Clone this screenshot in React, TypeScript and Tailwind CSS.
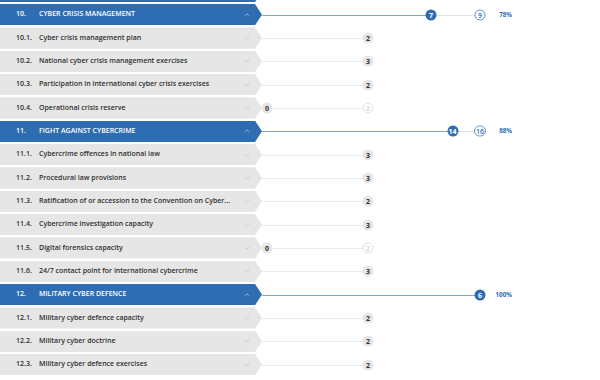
import React from "react";

type Item = { num: string; label: string; value: number; max: number };
type Section = { num: string; title: string; score: number; max: number; pct: string; items: Item[] };

const sections: Section[] = [
  {
    num: "10.",
    title: "CYBER CRISIS MANAGEMENT",
    score: 7,
    max: 9,
    pct: "78%",
    items: [
      { num: "10.1.", label: "Cyber crisis management plan", value: 2, max: 2 },
      { num: "10.2.", label: "National cyber crisis management exercises", value: 3, max: 3 },
      { num: "10.3.", label: "Participation in international cyber crisis exercises", value: 2, max: 2 },
      { num: "10.4.", label: "Operational crisis reserve", value: 0, max: 2 },
    ],
  },
  {
    num: "11.",
    title: "FIGHT AGAINST CYBERCRIME",
    score: 14,
    max: 16,
    pct: "88%",
    items: [
      { num: "11.1.", label: "Cybercrime offences in national law", value: 3, max: 3 },
      { num: "11.2.", label: "Procedural law provisions", value: 3, max: 3 },
      { num: "11.3.", label: "Ratification of or accession to the Convention on Cyber...", value: 2, max: 2 },
      { num: "11.4.", label: "Cybercrime investigation capacity", value: 3, max: 3 },
      { num: "11.5.", label: "Digital forensics capacity", value: 0, max: 2 },
      { num: "11.6.", label: "24/7 contact point for international cybercrime", value: 3, max: 3 },
    ],
  },
  {
    num: "12.",
    title: "MILITARY CYBER DEFENCE",
    score: 6,
    max: 6,
    pct: "100%",
    items: [
      { num: "12.1.", label: "Military cyber defence capacity", value: 2, max: 2 },
      { num: "12.2.", label: "Military cyber doctrine", value: 2, max: 2 },
      { num: "12.3.", label: "Military cyber defence exercises", value: 2, max: 2 },
    ],
  },
];

const FONT = { fontFamily: '"Open Sans", "Noto Sans", sans-serif' };
const TRACK_START = 262;

function ChevronDown({ color }: { color: string }) {
  return (
    <svg width="6" height="4" viewBox="0 0 6 4" className="shrink-0">
      <path d="M0.5 0.8 L3 3.2 L5.5 0.8" fill="none" stroke={color} strokeWidth="0.8" />
    </svg>
  );
}

function ChevronUp({ color }: { color: string }) {
  return (
    <svg width="6" height="4" viewBox="0 0 6 4" className="shrink-0">
      <path d="M0.5 3.2 L3 0.8 L5.5 3.2" fill="none" stroke={color} strokeWidth="0.8" />
    </svg>
  );
}

function HeaderRow({ s }: { s: Section }) {
  const filledX = 260 + (220 * s.score) / s.max;
  const outlineX = 480;
  return (
    <div className="flex h-[21.33px] mb-[2px]">
      <div className="w-[262px] shrink-0 flex items-center bg-[#2e6db1] pl-[16px] pr-[12px] text-white text-[7px] font-semibold [clip-path:polygon(0_0,255px_0,262px_50%,255px_100%,0_100%)]">
        <span className="w-[23px] shrink-0">{s.num}</span>
        <span className="flex-1 whitespace-nowrap overflow-hidden">{s.title}</span>
        <ChevronUp color="#9dbde3" />
      </div>
      <div className="relative flex-1">
        <div
          className="absolute top-1/2 h-px bg-[#7ea6d8]"
          style={{ left: 0, width: filledX - TRACK_START }}
        />
        {s.score < s.max && (
          <div
            className="absolute top-1/2 h-px bg-[#e3e3e3]"
            style={{ left: filledX - TRACK_START, width: outlineX - filledX }}
          />
        )}
        {s.score < s.max && (
          <div
            className="absolute top-1/2 -translate-x-1/2 -translate-y-1/2 h-[11px] min-w-[11px] px-[1px] rounded-full border border-[#5b8fcf] bg-white text-[#2e6db1] text-[7px] font-semibold flex items-center justify-center leading-none"
            style={{ left: outlineX - TRACK_START }}
          >
            {s.max}
          </div>
        )}
        <div
          className="absolute top-1/2 -translate-x-1/2 -translate-y-1/2 h-[11px] min-w-[11px] px-[1px] rounded-full bg-[#2e6db1] text-white text-[7px] font-bold flex items-center justify-center leading-none"
          style={{ left: filledX - TRACK_START }}
        >
          {s.score}
        </div>
        <div
          className="absolute top-1/2 -translate-y-1/2 text-[#2e6db1] text-[6.3px] font-bold leading-none text-right w-[24px]"
          style={{ left: 512 - 24 - TRACK_START }}
        >
          {s.pct}
        </div>
      </div>
    </div>
  );
}

function ItemRow({ it }: { it: Item }) {
  const endX = 368;
  const valX = it.max > 0 ? 267 + ((endX - 267) * it.value) / it.max : 267;
  return (
    <div className="flex h-[21.33px] mb-[2px]">
      <div className="w-[262px] shrink-0 flex items-center bg-[#e6e6e6] pl-[16px] pr-[12px] text-[#2f2f2f] text-[7px] font-semibold [clip-path:polygon(0_0,255px_0,262px_50%,255px_100%,0_100%)]">
        <span className="w-[23px] shrink-0">{it.num}</span>
        <span className="flex-1 whitespace-nowrap overflow-hidden">{it.label}</span>
        <ChevronDown color="#c4c4c4" />
      </div>
      <div className="relative flex-1">
        <div
          className="absolute top-1/2 h-px bg-[#ececec]"
          style={{ left: 0, width: endX - TRACK_START }}
        />
        {it.value < it.max && (
          <div
            className="absolute top-1/2 -translate-x-1/2 -translate-y-1/2 h-[11px] w-[11px] rounded-full border border-[#e0e0e0] bg-white text-[#d0d0d0] text-[7px] font-semibold flex items-center justify-center leading-none"
            style={{ left: endX - TRACK_START }}
          >
            {it.max}
          </div>
        )}
        <div
          className="absolute top-1/2 -translate-x-1/2 -translate-y-1/2 h-[11px] w-[11px] rounded-full bg-[#e6e6e6] text-[#2f2f2f] text-[7px] font-bold flex items-center justify-center leading-none"
          style={{ left: valX - TRACK_START }}
        >
          {it.value}
        </div>
      </div>
    </div>
  );
}

export default function App() {
  return (
    <div className="w-[600px] h-[380px] overflow-hidden bg-white" style={FONT}>
      <div className="mt-[-19.33px]">
        <div className="flex h-[21.33px] mb-[2px]">
          <div className="w-[262px] shrink-0 bg-[#2e6db1] [clip-path:polygon(0_0,255px_0,262px_50%,255px_100%,0_100%)]" />
        </div>
        {sections.map((s) => (
          <React.Fragment key={s.num}>
            <HeaderRow s={s} />
            {s.items.map((it) => (
              <ItemRow key={it.num} it={it} />
            ))}
          </React.Fragment>
        ))}
      </div>
    </div>
  );
}
